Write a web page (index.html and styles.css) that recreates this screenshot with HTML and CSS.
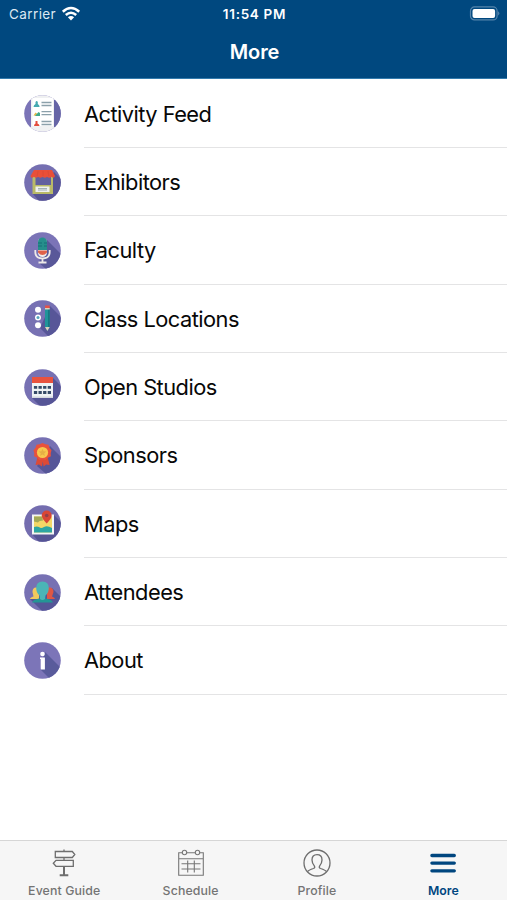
FILE: index.html
```html
<!DOCTYPE html>
<html lang="en">
<head>
<meta charset="utf-8">
<title>More</title>
<link rel="stylesheet" href="styles.css">
</head>
<body>
<svg class="defs" width="0" height="0" aria-hidden="true">
  <defs><clipPath id="disc"><circle cx="18.5" cy="18.5" r="18.3"/></clipPath></defs>
</svg>
<div class="app">
  <header class="top">
    <div class="status">
      <div class="carrier"><span>Carrier</span>
        <svg width="20" height="16" viewBox="0 0 20 16" fill="none" stroke="#fff" stroke-width="2.5">
          <path d="M1.8 5.7Q10-1.7 18.2 5.7M4.8 9Q10 4.400 15.200 9"/><path d="M6.900 11.200Q10 8.600 13.100 11.200L10 14.400Z" fill="#fff" stroke="none"/>
        </svg>
      </div>
      <div class="clock">11:54 PM</div>
      <svg class="battery" width="31" height="15" viewBox="0 0 31 15">
        <rect x="1.500" y=".9" width="26.600" height="13" rx="4" fill="none" stroke="#5484ab" stroke-width="1.200"/>
        <rect x="3.500" y="2.900" width="22.600" height="9" rx="2" fill="#fff"/>
        <path d="M29.300 5.300Q31.300 7.400 29.300 9.500Z" fill="#6d95b8"/>
      </svg>
    </div>
    <h1>More</h1>
  </header>
  <ul class="menu">
    <li><svg class="icon" viewBox="0 0 37 37"><g clip-path="url(#disc)"><path fill="#7b74b7" d="M0 0h37v37H0z"/><path fill="#6665a6" d="M30 5h7v27h-7z"/><path fill="#f0f1f2" d="M7 0h23v32h4v5H3v-5h4z"/><path fill="#fff" d="M8.500 3H29v28H8.500z"/><path fill="#45a9b0" d="M9.500 12q0-2 2-3V7q1.300-2 2.300 0v2q1.800 1 1.800 3z"/><path fill="#e5b94c" d="M9.500 20.500l2-3 2 1.500v2z"/><path fill="#3eaa8c" d="M11 21l3.500-4 1.500 1v3z"/><path fill="#e34c3c" d="M10 31q0-2 1.500-2.500V26h2v2.500Q15.500 29 15.500 31z"/><path stroke="#8ba0aa" stroke-width="1.300" d="M17.500 7.500h10M17.500 10.500h10M17.500 16.700h10M17.500 19.700h10M17.500 26.500h10M17.500 29.500h10"/></g></svg><span>Activity Feed</span></li>
    <li><svg class="icon" viewBox="0 0 37 37"><g clip-path="url(#disc)"><path fill="#756fb1" d="M0 0h37v37H0z"/><path fill="#565495" d="M30 8l7 7v22H15l-6-7z"/><path fill="#62609f" d="M11 13h16v10H11z"/><path fill="#b9ba68" d="M8.500 12h3v9H27v-9h2v18H8.500z"/><path fill="#eff1f0" d="M11.500 22.500h14v5.500h-14z"/><path stroke="#a3b1b6" d="M14 24.500h9M14 26h9"/><path fill="#e94f38" d="M10 6h18l3 6q-1 3-3.500.8-2 2-4.500 0-2 2-4.500 0-2 2-4.500 0-2 2-4 0Q7 15 6.500 12z"/><path stroke="#d84a37" stroke-width=".8" d="M14 7l-.8 5M19 7v5M24 7l.8 5"/></g></svg><span>Exhibitors</span></li>
    <li><svg class="icon" viewBox="0 0 37 37"><g clip-path="url(#disc)"><path fill="#7b74b7" d="M0 0h37v37H0z"/><path fill="#595899" d="M22 7l15 15v15H22l-7-6z"/><rect x="14" y="6" width="9" height="19" rx="4.500" fill="#f0eeeb"/><path fill="#268f8c" d="M14 18v-8a4.500 4.500 0 019 0v8z"/><path stroke="#176f79" d="M14 11h4M14 14h4M20 11h3M20 14h3"/><path fill="#df6149" d="M14 18.500h9v2q-4.500 5-9 0z"/><path fill="none" stroke="#eeeae8" stroke-width="1.800" d="M11.300 18v2q0 6.500 7.200 6.500t7.200-6.500v-2M18.500 26v4M14.500 30.500h8"/></g></svg><span>Faculty</span></li>
    <li><svg class="icon" viewBox="0 0 37 37"><g clip-path="url(#disc)"><path fill="#7771b3" d="M0 0h37v37H0z"/><path fill="#575698" d="M26 6l11 11v20H25l-9-9z"/><g fill="#fff"><circle cx="14" cy="9.700" r="3"/><circle cx="14" cy="17.500" r="3"/><circle cx="14" cy="25.300" r="3"/></g><circle cx="14" cy="17.500" r="1.500" fill="#55a6be"/><path fill="#20959a" d="M21 9h4.700v18l-2.300 4-2.400-4z"/><path fill="#177782" d="M24 9h1.700v18H24z"/><path fill="#e65347" d="M21 5.500h4.700v3H21z"/><path fill="#d9d2bd" d="M21 8h4.700v1.500H21zM21 27h4.700l-2.300 4z"/></g></svg><span>Class Locations</span></li>
    <li><svg class="icon" viewBox="0 0 37 37"><g clip-path="url(#disc)"><path fill="#7771b3" d="M0 0h37v37H0z"/><path fill="#565596" d="M29 9l8 8v20H16l-8-8z"/><path fill="#f0f3f5" d="M8 12h21v17H8z"/><path fill="#d4d8df" d="M8 27.500h21V29H8z"/><path fill="#e8523e" d="M8 8h21v6H8z"/><path stroke="#354a67" stroke-width="2.800" stroke-dasharray="3.300 1.300" d="M9.900 18.300h17.200M9.900 23.500h17.200"/></g></svg><span>Open Studios</span></li>
    <li><svg class="icon" viewBox="0 0 37 37"><g clip-path="url(#disc)"><path fill="#7771b3" d="M0 0h37v37H0z"/><path fill="#565698" d="M26 9l11 11v17H22l-9-8z"/><path fill="#dc4a36" d="M13.500 20l-2 8 3.500-.5 3 2 .8-5 .8 5 2.500-2 3.500.5-2-8z"/><path fill="#e9523b" d="M18.500 6l3 1.300 3 .5 1 3 2 2.500-.8 3 .2 3-3 1.500-2.300 2.300-3.100-.5-3.100.5-2.300-2.300-3-1.500.2-3-.8-3 2-2.500 1-3 3-.5z"/><circle cx="18.500" cy="15.500" r="5.600" fill="#f7c74e"/><path fill="#e6b044" d="M18.500 11.800l1.100 2.500 2.700.2-2 1.800.6 2.700-2.400-1.400-2.400 1.400.6-2.700-2-1.800 2.700-.2z"/></g></svg><span>Sponsors</span></li>
    <li><svg class="icon" viewBox="0 0 37 37"><g clip-path="url(#disc)"><path fill="#746daf" d="M0 0h37v37H0z"/><path fill="#555495" d="M30 10l7 7v20H15l-7-8z"/><path fill="#f3f5f4" d="M8 9.500h22v20H8z"/><path fill="#f3d767" d="M10 11.500h18v16H10z"/><path fill="#a3a957" d="M10 11.500h8l1 4q-4 0-5 2l-4-1z"/><path fill="#2ca6a3" d="M10 22q3-1 5 0 2 2 5 0 3-2 8 1v4.500H10z"/><path fill="#d84635" d="M22.700 18.500q-5-5.200-5-8a5 5 0 0110 0q0 2.800-5 8z"/><circle cx="22.700" cy="10.500" r="1.800" fill="#913f49"/></g></svg><span>Maps</span></li>
    <li><svg class="icon" viewBox="0 0 37 37"><g clip-path="url(#disc)"><path fill="#7771b3" d="M0 0h37v37H0z"/><path fill="#555597" d="M28 14l9 9v14H18L6 25z"/><path fill="#f2c95d" d="M8.500 18q0-4.500 3.500-4.500h3V25H6q0-1.500 3.500-2.500z"/><path fill="#df5744" d="M23 13.500h2.500q4 0 4 4.500l-1.500 4.500Q31 23.500 31 25h-8z"/><path fill="#239695" d="M8 28.500q1-3 7-4h7q6 1 7 4z"/><path fill="#4bb5b6" d="M12.200 14q0-6.500 6.300-6.500t6.300 6.500q0 5-3.300 7.500l-.5 3.500q-2.500 2-5 0l-.5-3.500q-3.300-2.500-3.300-7.500z"/></g></svg><span>Attendees</span></li>
    <li><svg class="icon" viewBox="0 0 37 37"><g clip-path="url(#disc)"><path fill="#7c75b8" d="M0 0h37v37H0z"/><path fill="#595b9b" d="M21 10l16 16v11H26l-9.500-9.500z"/><circle cx="18.500" cy="12" r="2.300" fill="#fff"/><path fill="#fff" d="M16 15.500h4.900v12H16.700V17H16z"/></g></svg><span>About</span></li>
  </ul>
  <nav class="tabs">
    <a class="tab"><svg viewBox="0 0 28 28" fill="none" stroke="#6e6e6e" stroke-width="1.300"><path d="M14 .5v2M14 8.500v2.800M5.300 2.500h17l2.500 3-2.500 3h-17zM23.300 11.300H6l-2.700 3 2.700 3h17.300z"/><path stroke-width="2" d="M14 17.300V26M9.700 26.300h8.600"/></svg><span>Event Guide</span></a>
    <a class="tab"><svg viewBox="0 0 28 28" fill="none" stroke="#777" stroke-width="1.100"><path d="M5.300 3.700H1.700v22.600h24.600V3.700h-3.600M10 3.700h8M1.700 9.700h24.600M4.500 14.700h19M4.500 20h19M10.700 11.500v12M17.300 11.500v12"/><circle cx="7.500" cy="3.500" r="2.200"/><circle cx="20.500" cy="3.500" r="2.200"/></svg><span>Schedule</span></a>
    <a class="tab"><svg viewBox="0 0 28 28" fill="none" stroke="#6e6e6e" stroke-width="1.300"><circle cx="14" cy="14" r="13"/><path d="M4.500 22.700Q5.500 21 10.500 19.500q2-.7.800-2.700Q9 14 9 11q0-5.300 5-5.300T19 11q0 3-2.300 5.800-1.200 2 .8 2.700 5 1.500 6 3.200"/></svg><span>Profile</span></a>
    <a class="tab active"><svg viewBox="0 0 28 28" stroke="#00467f" stroke-width="3.300" stroke-linecap="round"><path d="M2.900 6.500h22.400M2.900 14.100h22.400M2.900 21.800h22.400"/></svg><span>More</span></a>
  </nav>
</div>
</body>
</html>
```
FILE: styles.css
```css
* { box-sizing: border-box; }
body { margin: 0; background: #fff; font-family: Inter, sans-serif; }
.defs { display: block; }
.app { display: flex; flex-direction: column; width: 507px; height: 900px; overflow: hidden; }
.top { height: 79px; flex: none; background: #00487f; border-bottom: 1px solid #337bad; color: #fff; }
.status { display: grid; grid-template-columns: 1fr auto 1fr; align-items: center; height: 27px; padding: 0 7px 0 9px; }
.carrier { display: flex; align-items: center; gap: 5px; font-size: 13.5px; letter-spacing: .4px; color: #dce8f2; }
.clock { font-size: 13.5px; font-weight: 600; letter-spacing: .7px; }
.battery { justify-self: end; }
h1 { margin: 0; padding-left: 2px; font-size: 20px; font-weight: 600; line-height: 51px; text-align: center; letter-spacing: -.1px; }
.menu { list-style: none; margin: 0; padding: .7px 0 0; flex: 1; }
.menu li { display: flex; align-items: center; height: 68.35px; padding-left: 24px; font-size: 21.8px; letter-spacing: -.52px; color: #080808; }
.icon { width: 37px; height: 37px; margin-right: 23px; flex: none; }
.menu span { flex: 1; height: 100%; line-height: 68.35px; border-bottom: 1px solid #e4e4e5; }
.tabs { display: grid; grid-template-columns: repeat(4, 126.4px); height: 60px; padding-left: 1px; flex: none; background: #f6f6f6; border-top: 1px solid #d6d6d6; }
.tab { display: flex; flex-direction: column; align-items: center; padding-top: 8px; font-size: 12.3px; font-weight: 500; letter-spacing: .12px; line-height: 16px; color: #747474; }
.tab svg { width: 28px; height: 28px; margin-bottom: 6px; }
.active { color: #00467f; font-weight: 600; letter-spacing: 0; }
```
